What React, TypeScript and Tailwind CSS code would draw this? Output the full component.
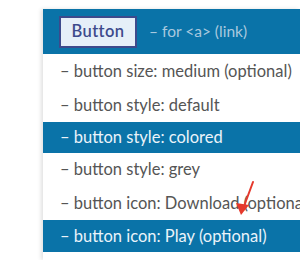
import React from "react";

const rows: { label: string; active?: boolean; h: string }[] = [
  { label: "– button size: medium (optional)", h: "h-[34px]" },
  { label: "– button style: default", h: "h-[34px]" },
  { label: "– button style: colored", active: true, h: "h-[31px]" },
  { label: "– button style: grey", h: "h-[33px]" },
  { label: "– button icon: Download (optional)", h: "h-[34px]" },
  { label: "– button icon: Play (optional)", active: true, h: "h-[32px]" },
];

export default function App() {
  return (
    <div className="relative h-[260px] w-[300px] overflow-hidden bg-white font-['Lato','Noto_Sans',sans-serif]">
      <div className="ml-[43px] mt-[9px] h-[251px] overflow-hidden bg-white shadow-[-2px_0_4px_rgba(0,0,0,0.12)]">
        <div className="flex h-[45px] items-center gap-3 bg-[#0a73a8] pl-[16px]">
          <div className="flex h-[32px] w-[78px] shrink-0 items-center justify-center border-2 border-[#3d4a8c] bg-[#e5eff8] text-[16.5px] font-semibold tracking-wide text-[#3d4a8c]">
            Button
          </div>
          <span className="whitespace-nowrap text-[15.5px] text-[#a9c9df]">– for &lt;a&gt; (link)</span>
        </div>
        {rows.map((r) => (
          <div
            key={r.label}
            className={
              r.active
                ? `flex ${r.h} items-center whitespace-nowrap bg-[#0a73a8] pl-[17px] text-[16.5px] text-[#eaf3fa]`
                : `flex ${r.h} items-center whitespace-nowrap pl-[17px] text-[16.5px] text-[#555555]`
            }
          >
            {r.label}
          </div>
        ))}
      </div>
      <svg className="absolute left-0 top-0" width="300" height="260" viewBox="0 0 300 260">
        <line x1="253" y1="182" x2="243" y2="209" stroke="#e5392c" strokeWidth="2" strokeLinecap="round" />
        <path d="M236 203 L241 215 L249 205 Z" fill="#e5392c" />
      </svg>
    </div>
  );
}
